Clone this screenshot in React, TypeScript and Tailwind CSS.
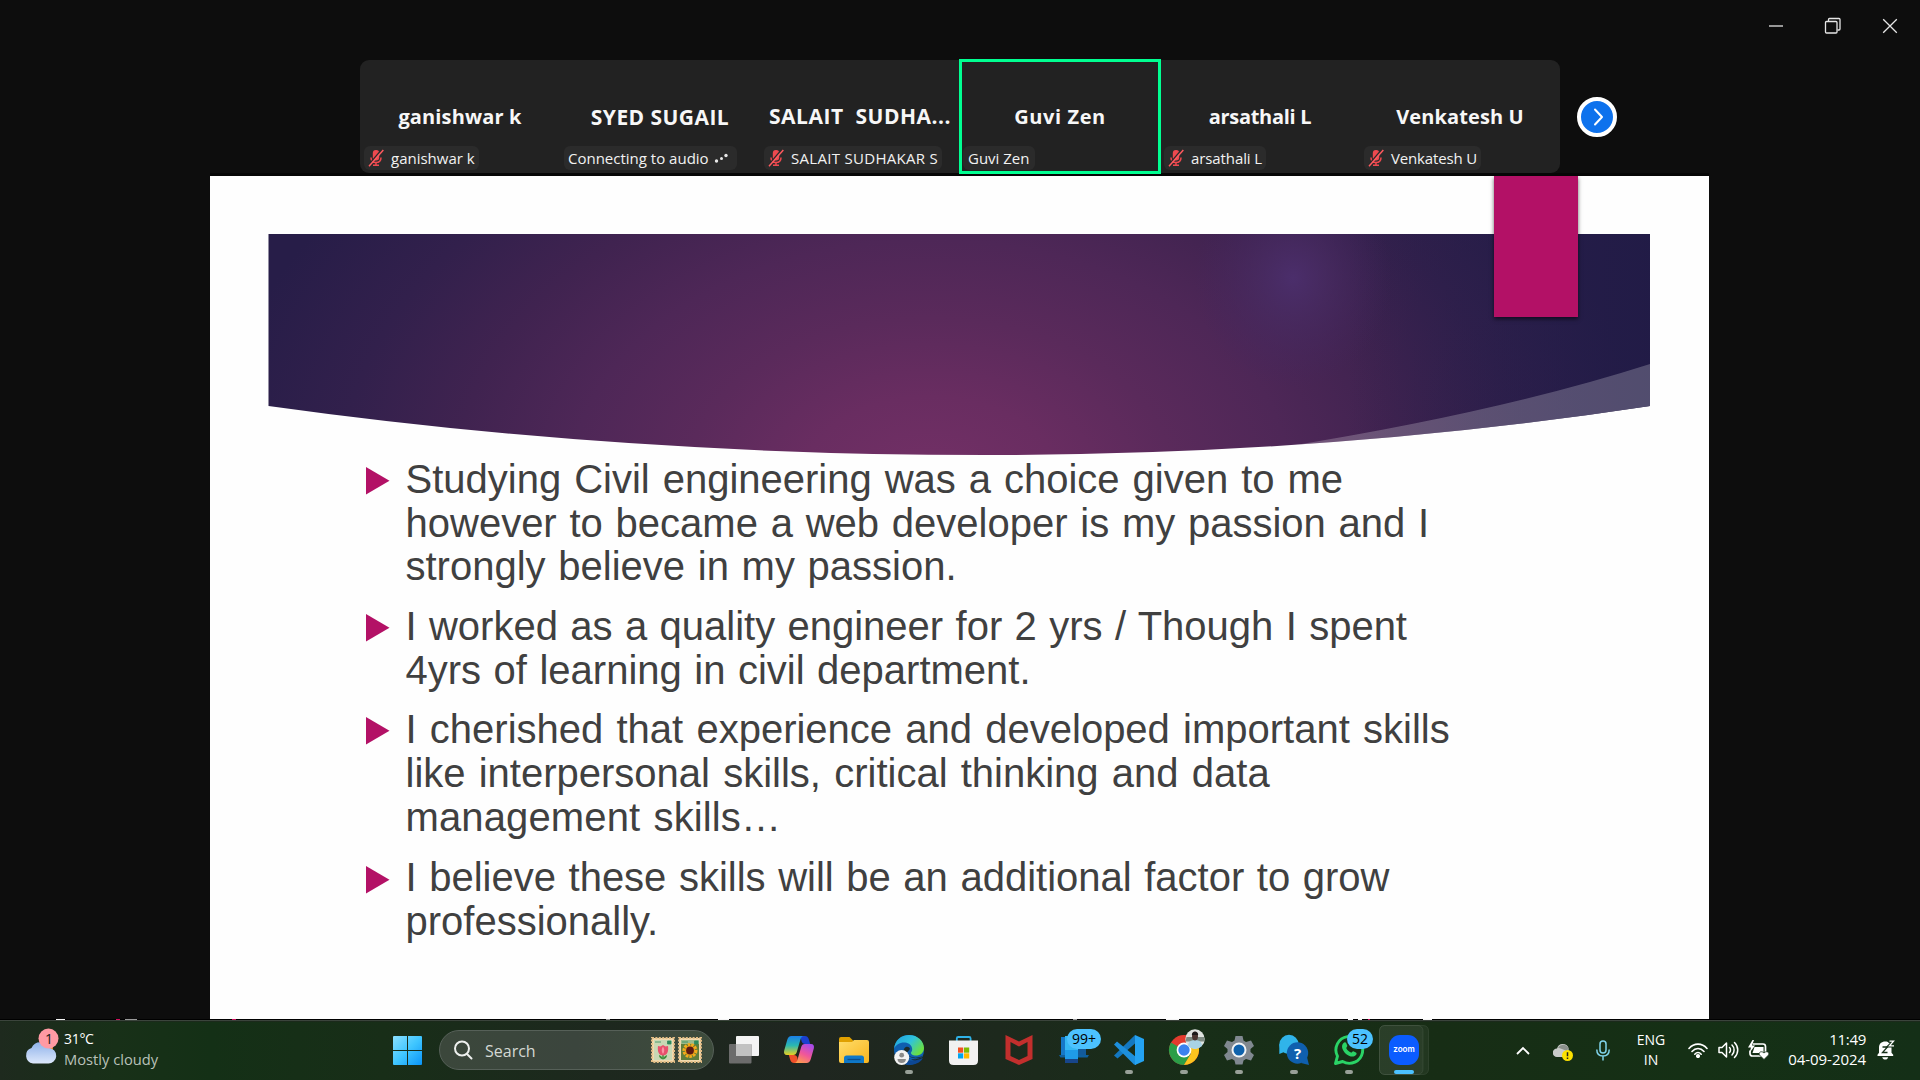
import type { ReactNode } from "react";

function MutedMic() {
  return (
    <svg width="16" height="18" viewBox="0 0 16 18" className="shrink-0">
      <rect x="4.800" y="1" width="6.400" height="10.500" rx="3" fill="#f0494f" />
      <path d="M3 8.500c0 3 2 5 5 5s5-2 5-5M8 13.500v2.500M5 16.300h6" stroke="#f0494f" strokeWidth="1.500" fill="none" />
      <path d="M14.300 0L0.300 16.300" stroke="#2a2a2a" strokeWidth="1.600" />
      <path d="M15.300 1L1 17.300" stroke="#ff5a5f" strokeWidth="1.500" />
    </svg>
  );
}

type Tile = { name: string; nameClass: string; label: string; labelClass?: string; muted?: boolean; connecting?: boolean; active?: boolean };

const tiles: Tile[] = [
  { name: "ganishwar k", nameClass: "text-[20px] tracking-[0.15px]", label: "ganishwar k", muted: true },
  { name: "SYED SUGAIL", nameClass: "text-[21px] tracking-[0.45px] mb-px", label: "Connecting to audio", connecting: true },
  { name: "SALAIT\u00a0 SUDHA...", nameClass: "text-[21px] tracking-[0.5px] mb-[3px]", label: "SALAIT SUDHAKAR S", labelClass: "tracking-[0.3px]", muted: true },
  { name: "Guvi Zen", nameClass: "text-[20px] tracking-[0.6px]", label: "Guvi Zen", active: true },
  { name: "arsathali L", nameClass: "text-[20px] tracking-[-0.3px]", label: "arsathali L", labelClass: "tracking-[-0.1px]", muted: true },
  { name: "Venkatesh U", nameClass: "text-[20px] tracking-[0.1px]", label: "Venkatesh U", labelClass: "tracking-[-0.15px]", muted: true },
];

function ParticipantTile({ t }: { t: Tile }) {
  return (
    <div className="relative flex w-[200px] shrink-0 flex-col">
      <div className="flex h-[86px] items-center justify-center pt-[28px]">
        <span className={`whitespace-nowrap font-['Open_Sans',sans-serif] font-bold leading-7 text-[#f7f7f7] ${t.nameClass}`}>{t.name}</span>
      </div>
      <div className={`flex h-6 w-fit items-center rounded-[6px] bg-[#2b2b2b] px-1 ${t.active ? "ml-[3px] px-[5px]" : "ml-1"}`}>
        {t.muted && <span className="mr-[7px] flex"><MutedMic /></span>}
        <span className={`whitespace-nowrap text-[15px] leading-6 text-[#f2f2f2] ${t.labelClass ?? ""}`}>{t.label}</span>
        {t.connecting && (
          <svg width="17" height="12" viewBox="0 0 17 12" className="ml-1 mr-[3px] shrink-0" fill="#e8e8e8">
            <circle cx="3.500" cy="9" r="1.700" />
            <circle cx="8.500" cy="6.500" r="1.500" />
            <circle cx="13" cy="3.500" r="1.700" />
          </svg>
        )}
      </div>
      {t.active && <div className="absolute -top-px -left-px h-[115px] w-[202px] border-[3px] border-[#00ff91]" />}
    </div>
  );
}

type Bullet = { lines: [string, string][] };

const bullets: Bullet[] = [
  {
    lines: [
      ["Studying Civil engineering was a choice given to me", "[word-spacing:1.85px]"],
      ["however to became a web developer is my passion and I", "[word-spacing:1.65px]"],
      ["strongly believe in my passion.", "[word-spacing:1.6px]"],
    ],
  },
  {
    lines: [
      ["I worked as a quality engineer for 2 yrs / Though I spent", "[word-spacing:1.25px]"],
      ["4yrs of learning in civil department.", "[word-spacing:1.4px]"],
    ],
  },
  {
    lines: [
      ["I cherished that experience and developed important skills", "[word-spacing:2.1px]"],
      ["like interpersonal skills, critical thinking and data", "[word-spacing:2.1px]"],
      ["management skills…", "[word-spacing:2px] tracking-[0.13px]"],
    ],
  },
  {
    lines: [
      ["I believe these skills will be an additional factor to grow", "[word-spacing:1.46px]"],
      ["professionally.", ""],
    ],
  },
];

function SlideBanner() {
  return (
    <svg width="1499" height="300" viewBox="210 176 1499 300" className="absolute left-0 top-0">
      <defs>
        <radialGradient id="base" gradientUnits="userSpaceOnUse" cx="0" cy="0" r="1" gradientTransform="translate(930 485) scale(720 490)">
          <stop offset="0" stopColor="#733066" />
          <stop offset="0.18" stopColor="#692d61" />
          <stop offset="0.34" stopColor="#5a2a5b" />
          <stop offset="0.5" stopColor="#4e2757" />
          <stop offset="0.66" stopColor="#402350" />
          <stop offset="0.82" stopColor="#32204c" />
          <stop offset="1" stopColor="#271d48" />
        </radialGradient>
        <radialGradient id="glow" gradientUnits="userSpaceOnUse" cx="0" cy="0" r="1" gradientTransform="translate(1293 278) scale(98 110)">
          <stop offset="0" stopColor="#4b2e6b" />
          <stop offset="0.4" stopColor="#492c65" stopOpacity="0.6" />
          <stop offset="1" stopColor="#452660" stopOpacity="0" />
        </radialGradient>
        <linearGradient id="shade" x1="0" x2="1" y1="0" y2="0">
          <stop offset="0.78" stopColor="#221c48" stopOpacity="0" />
          <stop offset="0.92" stopColor="#221c48" stopOpacity="0.5" />
          <stop offset="1" stopColor="#211b46" stopOpacity="0.9" />
        </linearGradient>
        <clipPath id="banner">
          <path d="M268.500 234H1650V406Q1330 455 985 455Q619 455 268.500 406Z" />
        </clipPath>
      </defs>
      <g clipPath="url(#banner)">
        <rect x="268" y="234" width="1382" height="222" fill="url(#base)" />
        <rect x="268" y="234" width="1382" height="222" fill="url(#shade)" />
        <rect x="1190" y="234" width="210" height="160" fill="url(#glow)" />
        <path d="M1280 447.500Q1497 413 1650 364V460H1280Z" fill="#fff" fillOpacity="0.22" />
      </g>
    </svg>
  );
}

function Slide() {
  return (
    <main className="relative ml-[210px] h-[843px] w-[1499px] shrink-0 overflow-hidden bg-[#fefefe]">
      <SlideBanner />
      <div className="absolute left-[1283.500px] top-0 h-[140.500px] w-[84.500px] bg-[#b31166] shadow-[0_2px_4px_rgba(0,0,0,0.6)]" />
      <ul className="flex flex-col gap-[15.800px] pl-[156px] pt-[281.600px]">
        {bullets.map((b, i) => (
          <li key={b.lines[0][0]} className={i === 2 ? "-mt-px mb-px flex" : "flex"}>
            <svg width="24" height="28" viewBox="0 0 24 28" className="mt-[9.300px] shrink-0">
              <path d="M0 0L23.500 13.700L0 27.500Z" fill="#b31166" />
            </svg>
            <div className="ml-[15.500px] flex flex-col font-['Liberation_Sans',sans-serif] text-[40px] leading-[43.900px] text-[#404040]">
              {b.lines.map(([text, cls]) => (
                <span key={text} className={`whitespace-nowrap ${cls}`}>{text}</span>
              ))}
            </div>
          </li>
        ))}
      </ul>
    </main>
  );
}

function EdgeSpecks() {
  return (
    <svg width="1920" height="3" viewBox="0 0 1920 3" className="block shrink-0">
      <rect width="1920" height="1" fill="#000" />
      <rect y="1" width="1920" height="1" fill="#3b443c" />
      <path d="M56 0h9v1h-9zM718 0h11v1h-11zM1166 0h13v1h-13zM1348 0h5v1h-5zM1358 0h4v1h-4zM1423 0h9v1h-9z" fill="#f4f4f4" />
      <path d="M116 0h4v1h-4zM232 0h4v1h-4zM1368 0h2v1h-2z" fill="#d0105c" />
      <path d="M125 0h12v1h-12zM606 0h4v1h-4zM960 0h2v1h-2zM1073 0h4v1h-4z" fill="#9a9a9a" />
      <rect y="2" width="1920" height="1" fill="#1b2a1b" />
    </svg>
  );
}

function AppCell({ children, open, badge, wide }: { children: ReactNode; open?: boolean; badge?: string; wide?: boolean }) {
  return (
    <div className="relative h-[60px] w-[55px] shrink-0">
      <svg width="55" height="60" viewBox="0 0 55 60">
        {children}
        {open && <rect x="23" y="50" width="8" height="4" rx="2" fill="#98a098" />}
      </svg>
      {badge && (
        <span className={`absolute top-[9px] flex h-5 items-center justify-center rounded-full bg-[#4cc2ff] text-[14px] leading-5 text-black ${wide ? "left-5 w-[34px]" : "left-[25px] w-[26px]"}`}>
          {badge}
        </span>
      )}
    </div>
  );
}

function TaskApps() {
  return (
    <div className="ml-[3px] flex">
      <AppCell>
        <rect x="19" y="16" width="23" height="20" rx="1" fill="#f4f4f4" />
        <rect x="12" y="24" width="22.500" height="19.500" rx="1" fill="#6c6c6c" />
        <rect x="19" y="24" width="15.500" height="12" fill="#c2c2c2" />
      </AppCell>
      <AppCell>
        <defs>
          <linearGradient id="cp1" x1="0" y1="0" x2="0" y2="1">
            <stop offset="0" stopColor="#1a7fe8" /><stop offset="0.5" stopColor="#2bb8b0" /><stop offset="1" stopColor="#e8d020" />
          </linearGradient>
          <linearGradient id="cp2" x1="0.7" y1="0" x2="0.2" y2="1">
            <stop offset="0" stopColor="#a94be8" /><stop offset="0.5" stopColor="#f0569a" /><stop offset="1" stopColor="#ffa04a" />
          </linearGradient>
        </defs>
        <path d="M28 16h5c2 0 3 1 3.700 3l1.500 5h-5c-2 0-3-1-3.500-2.500z" fill="#1a3fd0" />
        <path d="M26 43h-4c-2 0-3-1-3.700-3l-1.500-5h5c2 0 3 1 3.500 2.500z" fill="#f0502a" />
        <path d="M19.500 16H32c-2 0-3 1.500-3.700 4l-3.500 12c-.6 2-1.700 3-3.500 3H15c-2.500 0-3.500-2-2.800-4.500l3-10.500c.8-2.700 2-4 4.300-4z" fill="url(#cp1)" />
        <path d="M34.500 43H22c2 0 3-1.500 3.700-4l3.500-12c.6-2 1.700-3 3.500-3H39c2.500 0 3.500 2 2.800 4.500l-3 10.500c-.8 2.700-2 4-4.300 4z" fill="url(#cp2)" />
      </AppCell>
      <AppCell>
        <defs>
          <linearGradient id="fold" x1="0" y1="0" x2="1" y2="1"><stop offset="0" stopColor="#ffdd6a" /><stop offset="1" stopColor="#f8b51e" /></linearGradient>
        </defs>
        <path d="M12 19q0-2 2-2h8.500l4 4v4H12z" fill="#e0a000" />
        <path d="M12 22h13l2-2h13q2 0 2 2v19q0 2-2 2H14q-2 0-2-2z" fill="url(#fold)" />
        <path d="M17 43v-5q0-2.500 2.500-2.500h15q2.500 0 2.500 2.500v5z" fill="#0f78c8" />
        <path d="M20.500 39.500h13" stroke="#0a4d8c" strokeWidth="1.300" />
      </AppCell>
      <AppCell open>
        <defs>
          <linearGradient id="ed" x1="0" y1="0" x2="1" y2="0.6"><stop offset="0" stopColor="#1f9fe0" /><stop offset="0.55" stopColor="#2fc3dc" /><stop offset="1" stopColor="#6be040" /></linearGradient>
        </defs>
        <circle cx="27" cy="30" r="15" fill="#0f5fb0" />
        <path d="M12 29C13 20 19 15 27 15c9 0 15 6.500 15 13 0 5-4 7.500-8 7.500-3.500 0-5.500-1.500-5-3 1-1.500 1.500-2.500 1-4.500-1-4-4.500-5.500-8-5.500-4.500 0-8.500 2.500-10 6.500z" fill="url(#ed)" />
        <path d="M28 29c-.5-1.500-2-2.500-4-2-3 1-3 6-.5 9 3.500 4 10 4.500 16.500 1-.5 2-2 4-3.500 5.200C31 40.500 25 38 24 34z" fill="#1c2c2c" />
        <path d="M21 34c1 5 7 8.500 16 5.500 2-.8 3.500-1.500 3.800-1.200C38 43 33 45 27 45c-4 0-7-4-6-11z" fill="#0c4794" />
        <path d="M25 33c2 4.500 9 6.500 16 2.500-2 2.500-5 3-8 2.800-4-.2-7-2-8-5.300z" fill="#1f2820" />
        <circle cx="19.700" cy="37.500" r="7.500" fill="#f3f3f3" />
        <circle cx="19.700" cy="35.200" r="2.400" fill="#8a8a8a" />
        <path d="M15.500 39h8.400c0 2.500-1.700 4-4.200 4s-4.200-1.500-4.200-4z" fill="#8a8a8a" />
      </AppCell>
      <AppCell>
        <path d="M19.800 22v-3.500q0-1.500 1.500-1.500h10.800q1.500 0 1.500 1.500V22" fill="none" stroke="#2fb3e8" strokeWidth="1.800" />
        <path d="M12 20.500h29v20q0 4.500-4.500 4.500h-20q-4.500 0-4.500-4.500z" fill="#f1f1f1" />
        <rect x="21" y="27.500" width="5.200" height="5.200" fill="#f25022" />
        <rect x="27" y="27.500" width="5.200" height="5.200" fill="#7fba00" />
        <rect x="21" y="33.300" width="5.200" height="5.200" fill="#00a4ef" />
        <rect x="27" y="33.300" width="5.200" height="5.200" fill="#ffb900" />
      </AppCell>
      <AppCell>
        <path d="M13.500 15L27 21.500L40.500 15V39L27 45L13.500 39ZM18.500 22V36L27 40L35.500 36V22L27 26.500Z" fill="#c22f2d" fillRule="evenodd" />
      </AppCell>
      <AppCell badge="99+" wide>
        <path d="M14 17h14v20H14z" fill="#1678c8" />
        <path d="M12 35h30l-1.500 2.500h-27z" fill="#0f5f9e" />
        <path d="M28 22h11v13H28z" fill="#135a9a" />
        <rect x="18" y="16" width="13" height="27" fill="#1f9be8" />
        <rect x="18" y="39" width="13" height="4" fill="#17458a" />
        <rect x="18" y="16" width="13" height="14" fill="#35b8f4" />
      </AppCell>
      <AppCell open>
        <path d="M12 35.500L33 15V23.500L15.500 38.500Z" fill="#1478c0" />
        <path d="M12 24.500L15 21.500L34 37V45L32 44.500Z" fill="#1d8fdc" />
        <path d="M33 15L42 19V41L33 45Z" fill="#24a3f2" />
      </AppCell>
      <AppCell open>
        <circle cx="27" cy="30" r="15" fill="#e33b2e" />
        <path d="M27 30L14 22.500A15 15 0 0 0 27 45L34 33.800Z" fill="#2b9e47" />
        <path d="M27 23H40.300A15 15 0 0 1 27 45L34 33.500Z" fill="#fcc31e" />
        <circle cx="27" cy="30" r="7.400" fill="#fff" />
        <circle cx="27" cy="30" r="5.700" fill="#3b82ee" />
        <circle cx="38" cy="19" r="9.700" fill="#dfe3e0" />
        <path d="M29.500 17h17.500l.5 4.500h-19z" fill="#7f8c84" />
        <path d="M31 26c0-4 3-6 7-6s7 2 7 6a9.700 9.700 0 0 1-14 0z" fill="#a9d3e6" />
        <ellipse cx="38" cy="16" rx="3" ry="4.500" fill="#4a3430" />
        <path d="M34.800 15c0-4.500 6.400-4.500 6.400 0z" fill="#1d1a1a" />
      </AppCell>
      <AppCell open>
        <path d="M23.500 16h7l1 4.500 2.500 1.500 5-1.500 3 5.500-3.500 3v3l3.500 3-3 5.500-5-1.500-2.500 1.500-1 4h-7l-1-4-2.500-1.500-5 1.500-3-5.500 3.500-3v-3l-3.500-3 3-5.500 5 1.500 2.500-1.500z" fill="#808890" />
        <circle cx="27" cy="30" r="7.500" fill="#f2f4f6" />
        <circle cx="27" cy="30" r="5.500" fill="#0f62ac" />
      </AppCell>
      <AppCell open>
        <circle cx="22" cy="24.500" r="9.700" fill="#30b4ea" />
        <path d="M12.300 24v10l6-2.500z" fill="#30b4ea" />
        <circle cx="30.500" cy="33" r="10.700" fill="#0f5fae" />
        <path d="M34 43l8 2-2-8z" fill="#0f5fae" />
        <text x="30.500" y="38.500" textAnchor="middle" fontFamily="Open Sans, sans-serif" fontSize="15" fontWeight="700" fill="#fff">?</text>
      </AppCell>
      <AppCell open badge="52">
        <path d="M13.500 43.500l2-7.300A13.400 13.400 0 1 1 20.600 41.500z" fill="none" stroke="#2ad366" strokeWidth="2.900" strokeLinejoin="round" />
        <path d="M21.500 23c1-1 2.300-.8 2.800.3l1 2.400c.3.700-1.300 2-1 2.500 1 2 2.600 3.400 4.700 4.400.6.300 1.600-1.700 2.300-1.400l2.600 1.200c1 .5.800 1.800 0 2.700-2 2-4.500 1.700-7 .6-3.200-1.500-5.200-3.800-6.400-6.700-.8-2.200-.6-4.500 1-6z" fill="#2ad366" />
      </AppCell>
      <AppCell>
        <rect x="2.500" y="5.500" width="49" height="49" rx="5" fill="#ffffff" fillOpacity="0.05" stroke="#ffffff" strokeOpacity="0.08" />
        <rect x="2.500" y="5.500" width="43.500" height="49" rx="5" fill="#ffffff" fillOpacity="0.04" stroke="#ffffff" strokeOpacity="0.07" />
        <rect x="12" y="15" width="30" height="30" rx="11" fill="#0b5cff" />
        <text x="27" y="32.200" textAnchor="middle" textLength="21.500" lengthAdjust="spacingAndGlyphs" fontFamily="Inter, sans-serif" fontSize="8.500" fontWeight="600" fill="#fff">zoom</text>
        <rect x="17" y="50" width="20" height="4" rx="2" fill="#4cc2ff" />
      </AppCell>
    </div>
  );
}

function Stamp({ kind }: { kind: "tulip" | "sunflower" }) {
  return (
    <svg width="24" height="26" viewBox="0 0 24 26">
      <rect x="1" y="1" width="22" height="24" fill="#f0d9ae" stroke="#e3bd85" strokeWidth="2" strokeDasharray="2 1.400" />
      {kind === "tulip" ? (
        <>
          <rect x="3" y="3" width="18" height="20" fill="#c8d8b4" />
          <path d="M4 5h6M16.500 4h3.500v3h-3.500z" stroke="#2e8a5c" strokeWidth="0.800" fill="#2e8a5c" />
          <path d="M12 17v5" stroke="#3c8f3a" strokeWidth="1.500" />
          <path d="M12 22.500c-3-1-4-2.500-4-4.500 2 .5 4 2.500 4 4.500zM12 22.500c3-1 4-2.500 4-4.500-2 .5-4 2.500-4 4.500z" fill="#3c8f3a" />
          <path d="M7 9l2.500.5L12 8l2.500 1.500L17 9c.8 5.500-.8 9.500-5 9.500S6.200 14.500 7 9z" fill="#e8506c" />
          <path d="M12 9.500c1.700 2.500 1.700 5 0 7.500-1.700-2.500-1.700-5 0-7.500z" fill="#f994a4" />
        </>
      ) : (
        <>
          <rect x="3" y="3" width="18" height="20" fill="#5f7d3c" />
          <path d="M3 3h18v4H3z" fill="#9db98a" />
          <path d="M4 5h6M16.500 4h3.500v3h-3.500z" stroke="#2e8a5c" strokeWidth="0.800" fill="#2e8a5c" />
          <circle cx="12" cy="13.500" r="6" fill="none" stroke="#f5ab1a" strokeWidth="3" strokeDasharray="2.600 1" />
          <circle cx="12" cy="13.500" r="5" fill="#f0a018" />
          <circle cx="12" cy="13.500" r="3.900" fill="#5c1a12" />
        </>
      )}
    </svg>
  );
}

function Taskbar() {
  return (
    <footer className="flex h-[61px] w-[1920px] shrink-0 flex-col bg-[linear-gradient(90deg,#1e2a1e_0%,#183018_6%,#143016_11%,#182e18_20%,#1d281e_31%,#1f2620_42%,#1d291d_52%,#182e18_62%,#172d15_75%,#153015_88%,#142f17_100%)]">
      <EdgeSpecks />
      <div className="-mt-[2px] flex h-[60px] items-center">
        <div className="flex w-[393px] items-center">
          <svg width="36" height="40" viewBox="0 0 36 40" className="ml-[23px] mb-[5px]">
            <defs>
              <linearGradient id="cl" x1="0" y1="0" x2="0" y2="1"><stop offset="0" stopColor="#8fb2ea" /><stop offset="1" stopColor="#dde8fb" /></linearGradient>
            </defs>
            <circle cx="24" cy="20" r="6" fill="#f58a1c" />
            <path d="M10 35.500a8 8 0 0 1-1.500-15.500A9.500 9.500 0 0 1 26 20 7.500 7.500 0 0 1 25 35.500z" fill="url(#cl)" />
            <circle cx="25.500" cy="10.500" r="10" fill="#ff9aa4" />
            <text x="26" y="15.500" textAnchor="middle" fontFamily="Open Sans, sans-serif" fontSize="14" fill="#1a1a1a">1</text>
          </svg>
          <div className="mb-[3px] ml-[5px] flex flex-col text-[14.700px] leading-5">
            <span className="text-[14px] leading-5 tracking-[-0.3px] text-white">31°C</span>
            <span className="leading-5 text-[#b9c1b9]">Mostly cloudy</span>
          </div>
        </div>
        <svg width="29" height="29" viewBox="0 0 29 29">
          <defs>
            <linearGradient id="win" gradientUnits="userSpaceOnUse" x1="0" y1="0" x2="29" y2="29"><stop offset="0" stopColor="#8be0ff" /><stop offset="0.5" stopColor="#40c6ff" /><stop offset="1" stopColor="#0a94f8" /></linearGradient>
          </defs>
          <path d="M0 1q0-1 1-1h13v14H0zM15 0h13q1 0 1 1v13H15zM0 15h14v14H1q-1 0-1-1zM15 15h14v13q0 1-1 1H15z" fill="url(#win)" />
        </svg>
        <div className="ml-[17px] flex h-10 w-[275px] items-center rounded-full border border-[#566058] bg-[linear-gradient(90deg,#3b473b,#3b453d_50%,#3d4c3c)]">
          <svg width="20" height="20" viewBox="0 0 20 20" fill="none" stroke="#eef0ee" strokeWidth="2" strokeLinecap="round" className="ml-[13px]">
            <circle cx="9" cy="8.500" r="7" /><path d="M14 14l4.500 4.500" />
          </svg>
          <span className="ml-[12px] mt-px text-[16px] text-[#d3d8d3]">Search</span>
          <div className="ml-auto mr-[11px] flex gap-[3px]">
            <Stamp kind="tulip" />
            <Stamp kind="sunflower" />
          </div>
        </div>
        <TaskApps />
        <div className="flex w-[488px] items-center">
          <svg width="14" height="9" viewBox="0 0 14 9" fill="none" stroke="#fff" strokeWidth="1.800" className="ml-[84px]"><path d="M1 8l6-6 6 6" /></svg>
          <svg width="21" height="19" viewBox="0 0 21 19" className="ml-[23px] mt-1">
            <path d="M4 14a4 4 0 0 1 0-8.500A6 6 0 0 1 15.500 5L16 14z" fill="#c9cbc9" />
            <path d="M5 4.500A6 6 0 0 1 15.500 5L14 8z" fill="#8b908b" />
            <circle cx="14.500" cy="12.500" r="5.500" fill="#fce100" />
            <path d="M14.500 9.300v4M14.500 14.500v1.500" stroke="#222" strokeWidth="1.500" />
          </svg>
          <svg width="14" height="21" viewBox="0 0 14 21" fill="none" stroke="#7fd3ea" strokeWidth="1.500" className="ml-[22px]">
            <rect x="4" y="1" width="6" height="12" rx="3" /><path d="M0.800 9.500c0 4 2.500 6.500 6.200 6.500s6.200-2.500 6.200-6.500M7 16v4.500" />
          </svg>
          <div className="ml-[26px] flex w-[30px] flex-col items-center text-[14px] leading-5 text-white">
            <span>ENG</span>
            <span>IN</span>
          </div>
          <svg width="20" height="16" viewBox="0 0 20 16" fill="none" stroke="#fff" strokeWidth="1.600" strokeLinecap="round" className="ml-[22px]">
            <path d="M1 6.500c5-5.800 13-5.800 18 0M4 9.500c3.500-4 8.500-4 12 0M6.800 12.200c2-2.200 4.400-2.200 6.400 0" /><circle cx="10" cy="14" r="1.300" fill="#fff" />
          </svg>
          <svg width="21" height="18" viewBox="0 0 21 18" fill="none" stroke="#fff" strokeWidth="1.500" strokeLinecap="round" strokeLinejoin="round" className="ml-[10px]">
            <path d="M1 6.500h3L8.500 2v14L4 11.500H1zM11.500 6.500c1.300 1.300 1.300 3.700 0 5M14 4c2.800 2.800 2.800 7.200 0 10M16.500 1.500c4.300 4.300 4.300 10.700 0 15" />
          </svg>
          <svg width="21" height="20" viewBox="0 0 21 20" className="ml-[9px]">
            <path d="M5 4h10q2.500 0 2.500 2.500v7q0 2.500-2.500 2.500H4.500Q2 16 2 13.500v-3" fill="none" stroke="#fff" strokeWidth="1.700" />
            <path d="M6.500 7h9v6h-11z" fill="#fff" />
            <path d="M4.500 0L0 7.500h3L1.500 13 7 5.500H4L6 0z" fill="#fff" />
            <path d="M16 19.500l-4.500-4.500c-1.500-3 2.500-4.500 4.500-2 2-2.500 6-1 4.500 2z" fill="#fff" stroke="#18301a" strokeWidth="0.800" />
          </svg>
          <div className="mb-[3px] flex w-[97px] flex-col items-end text-[15px] leading-5 text-white">
            <span className="tracking-[-0.3px]">11:49</span>
            <span className="tracking-[-0.050px]">04-09-2024</span>
          </div>
          <svg width="18" height="20" viewBox="0 0 18 20" className="ml-[11px]">
            <path d="M0.500 16v-1.200L2 12.800V7.500C2 3.800 4.500 1.500 8.300 1.500s6.200 2.300 6.200 6v5.300l1.700 2V16z" fill="#fff" />
            <path d="M5.200 17.200h6c-.5 1.500-1.500 2.300-3 2.300s-2.500-.8-3-2.300z" fill="#fff" />
            <path d="M5.500 7h5L5.500 12.500h5" fill="none" stroke="#17301a" strokeWidth="1.300" />
            <path d="M11 1.200h5.500l-4.800 5H17" fill="none" stroke="#17301a" strokeWidth="2.800" />
            <path d="M12.500 1.200h4l-4 4.600h4.500" fill="none" stroke="#fff" strokeWidth="1.300" />
          </svg>
        </div>
      </div>
    </footer>
  );
}

export default function App() {
  return (
    <div className="flex h-[1080px] w-[1920px] flex-col overflow-hidden bg-[#0d0d0d] font-['Open_Sans',sans-serif]">
      <header className="flex h-[60px] shrink-0 justify-end pr-[22px] pt-[17px]">
        <svg width="130" height="18" viewBox="0 0 130 18" fill="none" stroke="#e6e6e6" strokeWidth="1.300">
          <path d="M1 9h14" stroke="#a8a8a8" strokeWidth="1.800" />
          <rect x="57.500" y="4.500" width="11.500" height="11.500" rx="1" />
          <path d="M60.500 4V2.500q0-1 1-1H71q1 0 1 1V12q0 1-1 1h-1.500" />
          <path d="M115.200 2.200l13.600 13.600M128.800 2.200L115.200 15.800" />
        </svg>
      </header>
      <section className="flex h-[113px] shrink-0 items-center pl-[360px]">
        <div className="flex h-[113px] w-[1200px] rounded-[9px] bg-[#222222]">
          {tiles.map((t) => (
            <ParticipantTile key={t.name} t={t} />
          ))}
        </div>
        <div className="ml-[17px] flex h-10 w-10 items-center justify-center rounded-full border-[4px] border-white bg-[#0e72ed]">
          <svg width="12" height="20" viewBox="0 0 12 20" fill="none" stroke="#fff" strokeWidth="2" strokeLinecap="round" strokeLinejoin="round" className="ml-[3px]">
            <path d="M2 2.500l7 7.500-7 7.500" />
          </svg>
        </div>
      </section>
      <div className="ml-[210px] h-[3px] w-[1499px] shrink-0 bg-[#060606]" />
      <Slide />
      <Taskbar />
    </div>
  );
}
